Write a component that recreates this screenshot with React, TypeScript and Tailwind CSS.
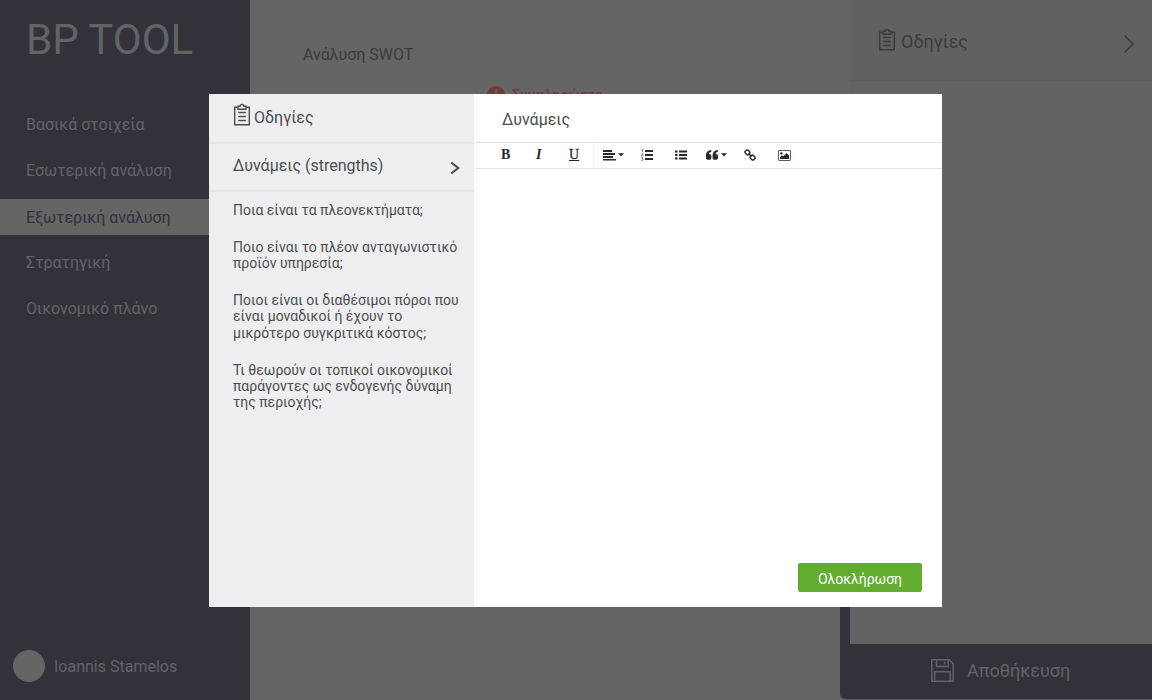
import React from "react";

const menu = ["Βασικά στοιχεία", "Εσωτερική ανάλυση", "Εξωτερική ανάλυση", "Στρατηγική", "Οικονομικό πλάνο"];

const Clipboard = () => (
  <svg width="18" height="24" viewBox="0 0 18 24" fill="none" stroke="currentColor" strokeWidth="1.4">
    <path d="M4.5 4.2H1.7v17.6h14.6V4.2h-2.8" />
    <path d="M5 3.3h2.1a1.9 1.9 0 0 1 3.8 0H13v2.9H5z" />
    <path d="M5.2 9.5h7.6M5.2 13.5h7.6M5.2 17.5h7.6" />
  </svg>
);

const Caret = () => (
  <svg width="6" height="4" viewBox="0 0 6 4" fill="currentColor"><path d="M0 .3h6L3 3.6z" /></svg>
);

const AlignLeft = () => (
  <svg width="13" height="11" viewBox="0 0 13 11" fill="currentColor">
    <path d="M0 0h9v2H0zM0 3h12v2H0zM0 6h10v2H0zM0 9h13v1.6H0z" />
  </svg>
);

const ListOl = () => (
  <svg width="12" height="12" viewBox="0 0 12 12">
    <path d="M4 1h8v2H4zM4 5h8v2H4zM4 9h8v2H4z" fill="currentColor" />
    <path d="M.5.9 1.5.4v2.8M.4 5q1.9-.8 1.7.3L.4 7h2M.3 8.8h1.8l-.9 1q1.4.2.8 1.2-.6.6-1.8.2" fill="none" stroke="currentColor" strokeWidth=".6" />
  </svg>
);

const ListUl = () => (
  <svg width="12" height="10" viewBox="0 0 12 10" fill="currentColor">
    <path d="M4 .5h8v2H4zM4 4h8v2H4zM4 7.5h8v2H4z" />
    <circle cx="1.3" cy="1.5" r="1.3" /><circle cx="1.3" cy="5" r="1.3" /><circle cx="1.3" cy="8.5" r="1.3" />
  </svg>
);

const Quote = () => (
  <svg width="12" height="10" viewBox="0 0 12 10" fill="currentColor">
    <path d="M5.3 0v1.7Q3 2 2.9 4.2H4q1.300 0 1.300 1.300v2.800q0 1.400-1.300 1.400H1.400Q0 9.700 0 8.300V4.800Q.2.500 5.300 0z" />
    <path d="M11.900 0v1.700Q9.600 2 9.500 4.200h1.100q1.300 0 1.300 1.300v2.800q0 1.400-1.300 1.400H8Q6.600 9.700 6.600 8.300V4.800Q6.800.5 11.900 0z" />
  </svg>
);

const Chain = () => (
  <svg width="12" height="12" viewBox="0 0 12 12" fill="none" stroke="currentColor" strokeWidth="1.4">
    <rect x="-2.4" y="-2" width="4.800" height="4" rx="1.700" transform="translate(3.400 3.400) rotate(45)" />
    <rect x="-2.4" y="-2" width="4.800" height="4" rx="1.700" transform="translate(8.600 8.600) rotate(45)" />
    <path d="m4.500 4.500 3 3" />
  </svg>
);

const Picture = () => (
  <svg width="13" height="11" viewBox="0 0 13 11">
    <rect x=".5" y=".5" width="12" height="10" rx=".5" fill="none" stroke="#55606b" />
    <circle cx="3.400" cy="3.400" r="1.200" fill="currentColor" />
    <path d="M2 9V7.300l2-2 1.200 1.200L8.500 3 11 5.500V9z" fill="currentColor" />
  </svg>
);

function Page() {
  return (
    <div className="flex h-[700px] w-[1152px] bg-[#656565] text-[#3b3b3b]">
      <aside className="flex w-[250px] shrink-0 flex-col bg-[#33323b] text-[#636363]">
        <h1 className="pl-[26px] pt-4 text-[42px] leading-[48px]">BP TOOL</h1>
        <nav className="mt-[43px] flex flex-col gap-[10px]">
          {menu.map((item, i) => (
            <a key={item} className={i === 2 ? "h-9 bg-[#656565] pl-[26px] leading-[38px] text-[#33323b]" : "h-9 pl-[26px] leading-9"}>{item}</a>
          ))}
        </nav>
        <div className="mt-auto mb-[18px] flex items-center gap-[9px] pl-[13px]">
          <span className="size-8 rounded-full bg-[#656565]" />
          <span className="pt-[2px]">Ioannis Stamelos</span>
        </div>
      </aside>
      <main className="flex w-[590px] shrink-0 flex-col">
        <h2 className="pl-[53px] pt-[43px] leading-6">Ανάλυση SWOT</h2>
        <div className="mt-[17px] flex items-center gap-[7px] pl-[237px] text-[14px] font-medium text-[#713a3b]">
          <span className="flex size-[18px] items-center justify-center rounded-full bg-[#713a3b] text-[#656565]">!</span>
          <span className="pt-[1px]">Συμπληρώστε</span>
        </div>
      </main>
      <div className="flex h-[699px] grow flex-col">
        <div className="flex grow">
          <div className="flex w-[10px] flex-col"><div className="mt-[600px] grow bg-[#33323b]" /></div>
          <div className="grow bg-[#636363]">
            <div className="flex h-[81px] items-center border-b-2 border-[#5f5f5f] bg-[#616161] pl-[28px] pr-[17px] text-[18px]">
              <span><Clipboard /></span>
              <span className="ml-[5px] mt-[3px]">Οδηγίες</span>
              <svg className="ml-auto mt-[9px]" width="12" height="20" viewBox="0 0 12 20" fill="none" stroke="currentColor" strokeWidth="1.6"><path d="m1.5 1.5 8.5 8.5-8.5 8.5" /></svg>
            </div>
          </div>
        </div>
        <button className="flex h-[55px] items-center rounded-bl-[5px] bg-[#33323b] pl-[90px] text-[18px] text-[#636363]">
          <svg className="-mt-[2px]" width="25" height="25" viewBox="0 0 25 25" fill="none" stroke="currentColor" strokeWidth="1.5">
            <path d="M1.8 1.8h17.4l4 4v17.4H1.8zM6.500 2v6.600h11.700V2M14.500 3.800v2.500M4.700 23v-9.200h15.500V23" />
          </svg>
          <span className="-mt-[2px] ml-3">Αποθήκευση</span>
        </button>
      </div>
    </div>
  );
}

function Toolbar() {
  return (
    <div className="ml-px flex h-[27px] items-center border-y border-[#e2e2e2] pl-[26px] text-[#292929]">
      <div className="flex pb-[2px] font-['Liberation_Serif',serif] text-[14px] leading-[20px]">
        <span className="w-[35px] font-bold">B</span>
        <span className="w-[33px] font-bold italic">I</span>
        <span className="w-[24px] underline decoration-1 underline-offset-1 [-webkit-text-stroke:0.3px_currentColor]">U</span>
      </div>
      <span className="mr-[9px] h-full border-l border-[#f3f3f3]" />
      <div className="flex items-center pb-px">
        <span className="flex w-[38px] items-center gap-[2px]"><AlignLeft /><Caret /></span>
        <span className="flex w-[34px]"><ListOl /></span>
        <span className="flex w-[31px]"><ListUl /></span>
        <span className="flex w-[38px] items-center gap-[3px]"><Quote /><Caret /></span>
        <span className="flex w-[34px]"><Chain /></span>
        <Picture />
      </div>
    </div>
  );
}

export default function App() {
  return (
    <div className="relative h-[700px] w-[1152px] overflow-hidden font-['Roboto',sans-serif] text-[16px]">
      <Page />
      <section role="dialog" className="absolute left-[209px] top-[94px] flex h-[513px] w-[733px] bg-white text-[#4d4d4d]">
        <div className="w-[265px] shrink-0 bg-[#eeeef0]">
          <header className="flex h-[50px] items-start border-b-2 border-[#e5e5e7] pl-6 pt-[9px]">
            <Clipboard />
            <span className="ml-[3px] mt-[3px] leading-6">Οδηγίες</span>
          </header>
          <div className="flex h-12 items-center border-b-2 border-[#e5e5e7] pl-6 pr-[14px]">
            <span className="-mt-[2px]">Δυνάμεις (strengths)</span>
            <svg className="ml-auto mt-px" width="10" height="14" viewBox="0 0 10 14" fill="none" stroke="currentColor" strokeWidth="2.2"><path d="m1.200 1.500 7 5.500-7 5.500" /></svg>
          </div>
          <div className="flex flex-col gap-[20.67px] whitespace-nowrap pl-6 pt-[9.7px] text-[14px] leading-[16.34px]">
            <p>Ποια είναι τα πλεονεκτήματα;</p>
            <p>Ποιο είναι το πλέον ανταγωνιστικό<br />προϊόν υπηρεσία;</p>
            <p>Ποιοι είναι οι διαθέσιμοι πόροι που<br />είναι μοναδικοί ή έχουν το<br />μικρότερο συγκριτικά κόστος;</p>
            <p>Τι θεωρούν οι τοπικοί οικονομικοί<br />παράγοντες ως ενδογενής δύναμη<br />της περιοχής;</p>
          </div>
        </div>
        <div className="flex grow flex-col">
          <h3 className="h-12 pl-7 pt-[14px] leading-6">Δυνάμεις</h3>
          <Toolbar />
          <div className="grow" />
          <button className="mb-[15px] mr-5 h-[29px] w-[124px] self-end rounded-[2px] bg-[#62ad30] pt-[3px] text-[14px] text-white">Ολοκλήρωση</button>
        </div>
      </section>
    </div>
  );
}
